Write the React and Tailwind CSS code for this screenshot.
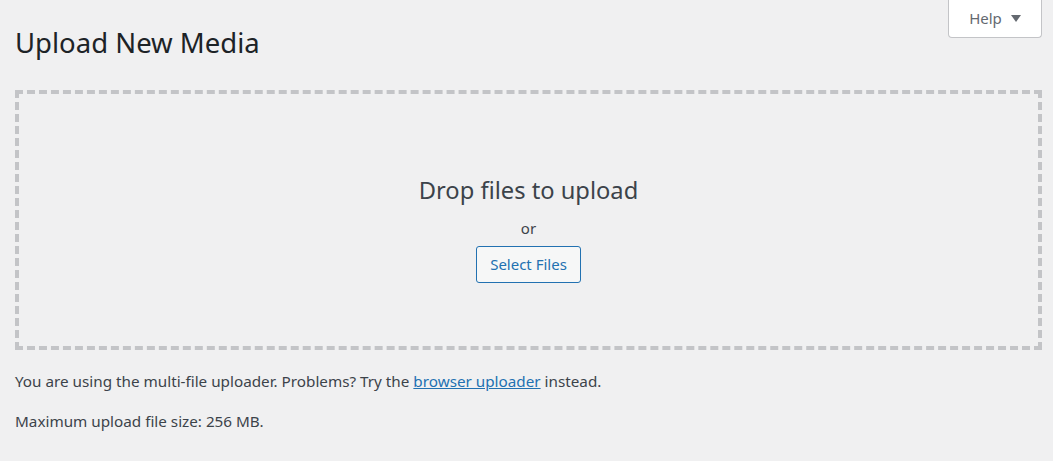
export default function App() {
  return (
    <div className="w-[1053px] h-[461px] bg-[#f0f0f1] relative overflow-hidden" style={{ fontFamily: '"Noto Sans", "Open Sans", sans-serif' }}>
      <button className="absolute right-[11px] top-0 w-[94px] h-[38px] bg-white border border-t-0 border-[#c3c4c7] rounded-b-[4px] flex items-center justify-center gap-[9px] text-[15px] text-[#646970]">
        <span>Help</span>
        <svg width="10" height="8" viewBox="0 0 10 8"><path d="M0 0 L10 0 L5 7 Z" fill="#646970" /></svg>
      </button>
      <div className="pl-[15px] pr-[11px]">
        <h1 className="text-[27.5px] leading-[34px] text-[#1d2327] font-normal pt-[26px] pb-[30px] m-0">Upload New Media</h1>
        <div className="border-4 border-dashed border-[#c3c4c7] h-[260px] flex flex-col items-center pt-[80px]">
          <div className="text-[23.7px] leading-[32px] text-[#3c434a]">Drop files to upload</div>
          <div className="text-[15px] leading-[20px] text-[#3c434a] mt-[12px]">or</div>
          <button className="mt-[8px] h-[37px] px-[13px] border border-[#2271b1] rounded-[3px] bg-[#f6f7f7] text-[#2271b1] text-[15px]">Select Files</button>
        </div>
        <p className="mt-[21px] text-[15.25px] leading-[20px] text-[#3c434a]">
          You are using the multi-file uploader. Problems? Try the <a href="#" className="text-[#2271b1] underline">browser uploader</a> instead.
        </p>
        <p className="mt-[20px] text-[15.25px] leading-[20px] text-[#3c434a]">Maximum upload file size: 256 MB.</p>
      </div>
    </div>
  );
}
